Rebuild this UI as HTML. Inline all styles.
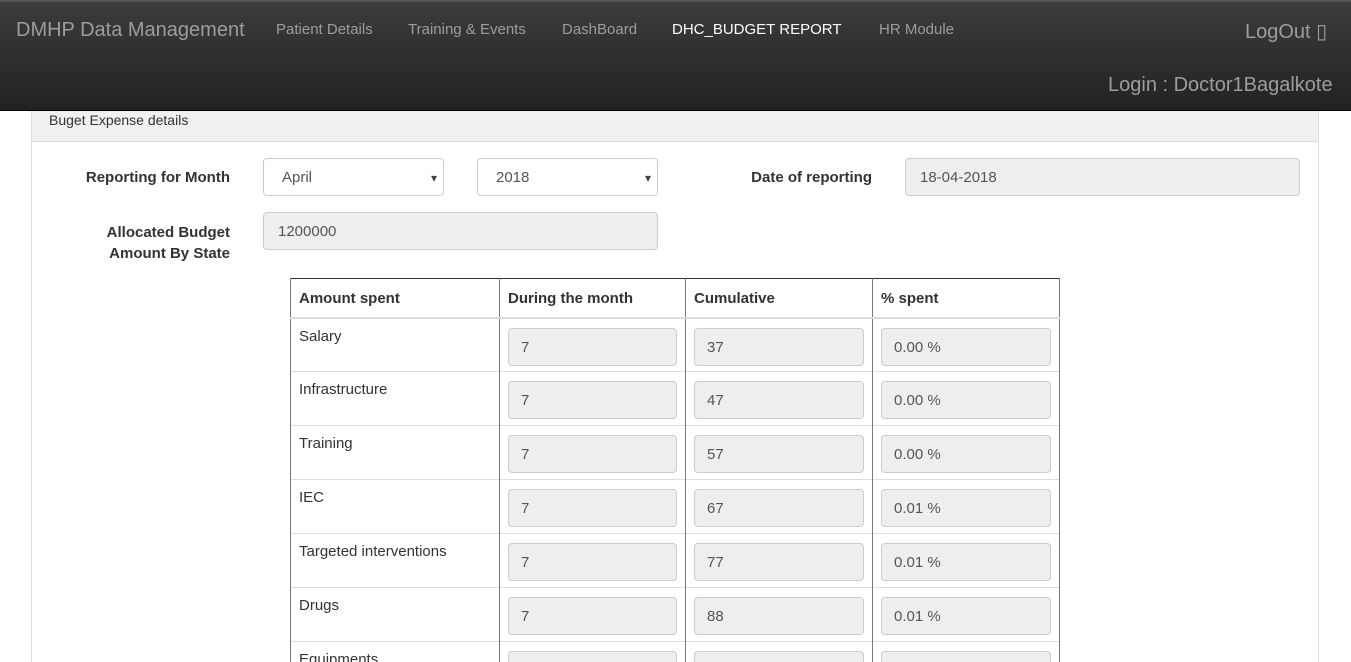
<!DOCTYPE html>
<html style="height:662px;overflow:hidden"><head><style>
*{box-sizing:border-box}
body{margin:0;width:1351px;height:662px;overflow:hidden;background:#fff;font-family:"Liberation Sans",Arial,sans-serif;font-size:15px;color:#333;position:relative}
.nav{position:absolute;left:0;top:0;width:1351px;height:111px;background:linear-gradient(#3c3c3c,#222);border-top:2px solid #555;border-bottom:1px solid #080808}
.nav span{position:absolute;color:#9d9d9d;font-size:15px;top:19px}
.brand{font-size:20px!important;left:16px;top:17px!important}
.panel{position:absolute;left:31px;top:111px;width:1288px;height:551px;border:1px solid #ddd;border-top:none;border-bottom:none}
.ph{height:31px;background:#f0f0f0;border-bottom:1px solid #ddd;padding:0 0 0 17px;line-height:18px;font-size:14px}
.lbl{position:absolute;font-weight:bold;text-align:right;font-size:15px;color:#333}
.in{position:absolute;height:38px;border:1px solid #ccc;border-radius:4px;background:#eee;padding:0 14px;line-height:38px;color:#555;font-size:15px}
.sel{background:#fff;padding-left:18px}
.sel:after{content:"▾";position:absolute;right:6px;top:0;font-size:12px;color:#444}
table{position:absolute;left:290px;top:278px;border-collapse:collapse;border:1px solid #333}
td,th{border-left:1px solid #777;border-right:1px solid #777;text-align:left;vertical-align:top;padding:0}
th{height:39px;border-bottom:2px solid #ddd;padding:11px 8px 9px;font-size:15px}
td{height:54px;border-top:1px solid #ddd;padding:9px 8px 0;font-size:15px}
td .c{height:38px;border:1px solid #ccc;border-radius:4px;background:#eee;padding:0 12px;line-height:38px;color:#555}
</style></head><body>
<div class="nav">
<span class="brand">DMHP Data Management</span>
<span style="left:276px">Patient Details</span>
<span style="left:408px">Training &amp; Events</span>
<span style="left:562px">DashBoard</span>
<span style="left:672px;color:#fff">DHC_BUDGET REPORT</span>
<span style="left:879px">HR Module</span>
<span style="left:1245px;font-size:20px;top:17px">LogOut ▯</span>
<span style="left:1108px;font-size:20px;top:72px">Login : Doctor1Bagalkote</span>
</div>
<div class="panel"><div class="ph">Buget Expense details</div></div>
<div class="lbl" style="left:50px;top:169px;width:180px">Reporting for Month</div>
<div class="in sel" style="left:263px;top:158px;width:181px">April</div>
<div class="in sel" style="left:477px;top:158px;width:181px">2018</div>
<div class="lbl" style="left:690px;top:169px;width:182px">Date of reporting</div>
<div class="in" style="left:905px;top:158px;width:395px">18-04-2018</div>
<div class="lbl" style="left:50px;top:222px;width:180px;line-height:21px">Allocated Budget<br>Amount By State</div>
<div class="in" style="left:263px;top:212px;width:395px">1200000</div>
<table>
<tr><th style="width:209px">Amount spent</th><th style="width:186px">During the month</th><th style="width:187px">Cumulative</th><th style="width:187px">% spent</th></tr>
<tr><td>Salary</td><td><div class="c">7</div></td><td><div class="c">37</div></td><td><div class="c">0.00 %</div></td></tr>
<tr><td>Infrastructure</td><td><div class="c">7</div></td><td><div class="c">47</div></td><td><div class="c">0.00 %</div></td></tr>
<tr><td>Training</td><td><div class="c">7</div></td><td><div class="c">57</div></td><td><div class="c">0.00 %</div></td></tr>
<tr><td>IEC</td><td><div class="c">7</div></td><td><div class="c">67</div></td><td><div class="c">0.01 %</div></td></tr>
<tr><td>Targeted interventions</td><td><div class="c">7</div></td><td><div class="c">77</div></td><td><div class="c">0.01 %</div></td></tr>
<tr><td>Drugs</td><td><div class="c">7</div></td><td><div class="c">88</div></td><td><div class="c">0.01 %</div></td></tr>
<tr><td>Equipments</td><td><div class="c"></div></td><td><div class="c"></div></td><td><div class="c"></div></td></tr>
</table>
</body></html>
